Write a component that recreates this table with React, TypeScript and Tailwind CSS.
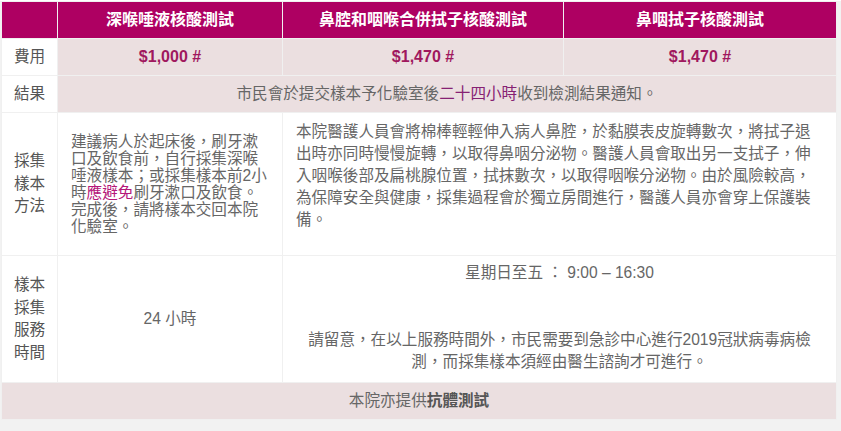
import { type ReactNode } from 'react';

const font = "font-['Liberation_Sans','Noto_Sans_CJK_TC',sans-serif]";

/* ── header cell ── */
function Head({ children }: { children?: ReactNode }) {
  return (
    <div className="flex items-center justify-center bg-[#ae0062] text-[16px] font-bold text-white">
      {children}
    </div>
  );
}

/* ── row label (left column) ── */
function Label({ children }: { children: ReactNode }) {
  return (
    <div className="flex items-center justify-center bg-white px-[10px] text-center text-[15.6px] leading-[22.5px] text-[#555]">
      <span>{children}</span>
    </div>
  );
}

function Price({ children }: { children: ReactNode }) {
  return (
    <div className="flex items-center justify-center bg-[#ebdfe0] text-[16px] font-bold text-[#a0185e]">
      {children}
    </div>
  );
}

export default function App() {
  return (
    <div className={`min-h-screen bg-[#f2f2f2] ${font}`}>
      <div className="ml-px mt-px grid w-[836px] grid-cols-[55px_224px_280px_272px] grid-rows-[36px_36px_36px_142px_126px_36px] gap-px bg-[#f0f0f0] p-px">
        {/* header */}
        <Head />
        <Head>深喉唾液核酸測試</Head>
        <Head>鼻腔和咽喉合併拭子核酸測試</Head>
        <Head>鼻咽拭子核酸測試</Head>

        {/* fee */}
        <Label>費用</Label>
        <Price>$1,000 #</Price>
        <Price>$1,470 #</Price>
        <Price>$1,470 #</Price>

        {/* result */}
        <Label>結果</Label>
        <div className="col-span-3 flex items-center justify-center bg-[#ebdfe0] text-[15.6px] text-[#666]">
          <span>
            市民會於提交樣本予化驗室後<span className="text-[#862173]">二十四小時</span>收到檢測結果通知。
          </span>
        </div>

        {/* method */}
        <Label>採集樣本方法</Label>
        <div className="flex items-center bg-white px-[13px] text-[15.6px] leading-[17px] text-[#666]">
          <p>
            建議病人於起床後，刷牙漱口及飲食前，自行採集深喉唾液樣本；或採集樣本前2小時
            <span className="inline-block text-[#b5177a]">應避免</span>刷牙漱口及飲食。完成後，請將樣本交回本院化驗室。
          </p>
        </div>
        <div className="col-span-2 bg-white px-[13px] pt-2 text-[15.6px] leading-[22px] text-[#666]">
          <p>
            本院醫護人員會將棉棒輕輕伸入病人鼻腔，於黏膜表皮旋轉數次，將拭子退出時亦同時慢慢旋轉，以取得鼻咽分泌物。醫護人員會取出另一支拭子，伸入咽喉後部及扁桃腺位置，拭抹數次，以取得咽喉分泌物。由於風險較高，為保障安全與健康，採集過程會於獨立房間進行，醫護人員亦會穿上保護裝備。
          </p>
        </div>

        {/* service hours */}
        <Label>樣本採集服務時間</Label>
        <div className="flex items-center justify-center bg-white text-[15.6px] text-[#666]">24 小時</div>
        <div className="col-span-2 bg-white px-[13px] pt-[6px] text-center text-[15.6px] leading-[22px] text-[#666]">
          <p>星期日至五 ： 9:00 – 16:30</p>
          <p className="mt-[45px]">
            請留意，在以上服務時間外，市民需要到急診中心進行2019冠狀病毒病檢測，而採集樣本須經由醫生諮詢才可進行。
          </p>
        </div>

        {/* footer */}
        <div className="col-span-4 flex items-center justify-center bg-[#ebdfe0] text-[15.6px] text-[#666]">
          <span>
            本院亦提供<b className="font-bold text-[#555]">抗體測試</b>
          </span>
        </div>
      </div>
    </div>
  );
}
